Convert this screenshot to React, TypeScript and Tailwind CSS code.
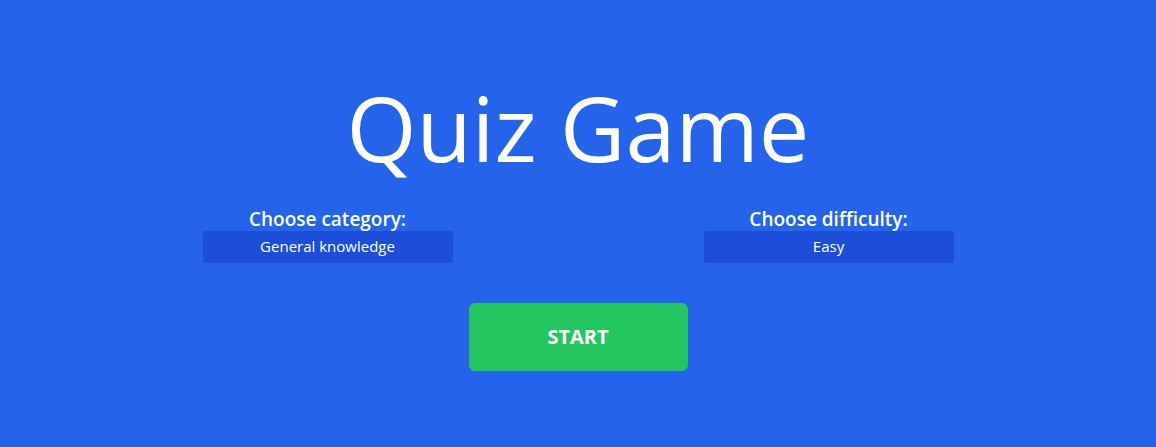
import React from "react";

export default function App() {
  return (
    <div
      className="min-h-screen w-full bg-[#2563eb] flex flex-col items-center justify-center text-white pb-[10px]"
      style={{ fontFamily: '"Open Sans", "Noto Sans", sans-serif' }}
    >
      <h1 className="text-[90px] leading-[120px] font-normal">Quiz Game</h1>
      <div className="w-[751px] flex justify-between mt-[20px]">
        <div className="flex flex-col items-center w-[250px]">
          <label className="text-[19px] font-semibold leading-[24px]">Choose category:</label>
          <select className="appearance-none w-[250px] h-[32px] rounded-[3px] bg-[#1d4ed8] text-white text-[15px] text-center [text-align-last:center] outline-none">
            <option>General knowledge</option>
          </select>
        </div>
        <div className="flex flex-col items-center w-[250px]">
          <label className="text-[19px] font-semibold leading-[24px]">Choose difficulty:</label>
          <select className="appearance-none w-[250px] h-[32px] rounded-[3px] bg-[#1d4ed8] text-white text-[15px] text-center [text-align-last:center] outline-none">
            <option>Easy</option>
          </select>
        </div>
      </div>
      <button className="mt-[40px] w-[219px] h-[68px] rounded-[6px] bg-[#22c55e] text-white text-[20px] font-bold">
        START
      </button>
    </div>
  );
}
